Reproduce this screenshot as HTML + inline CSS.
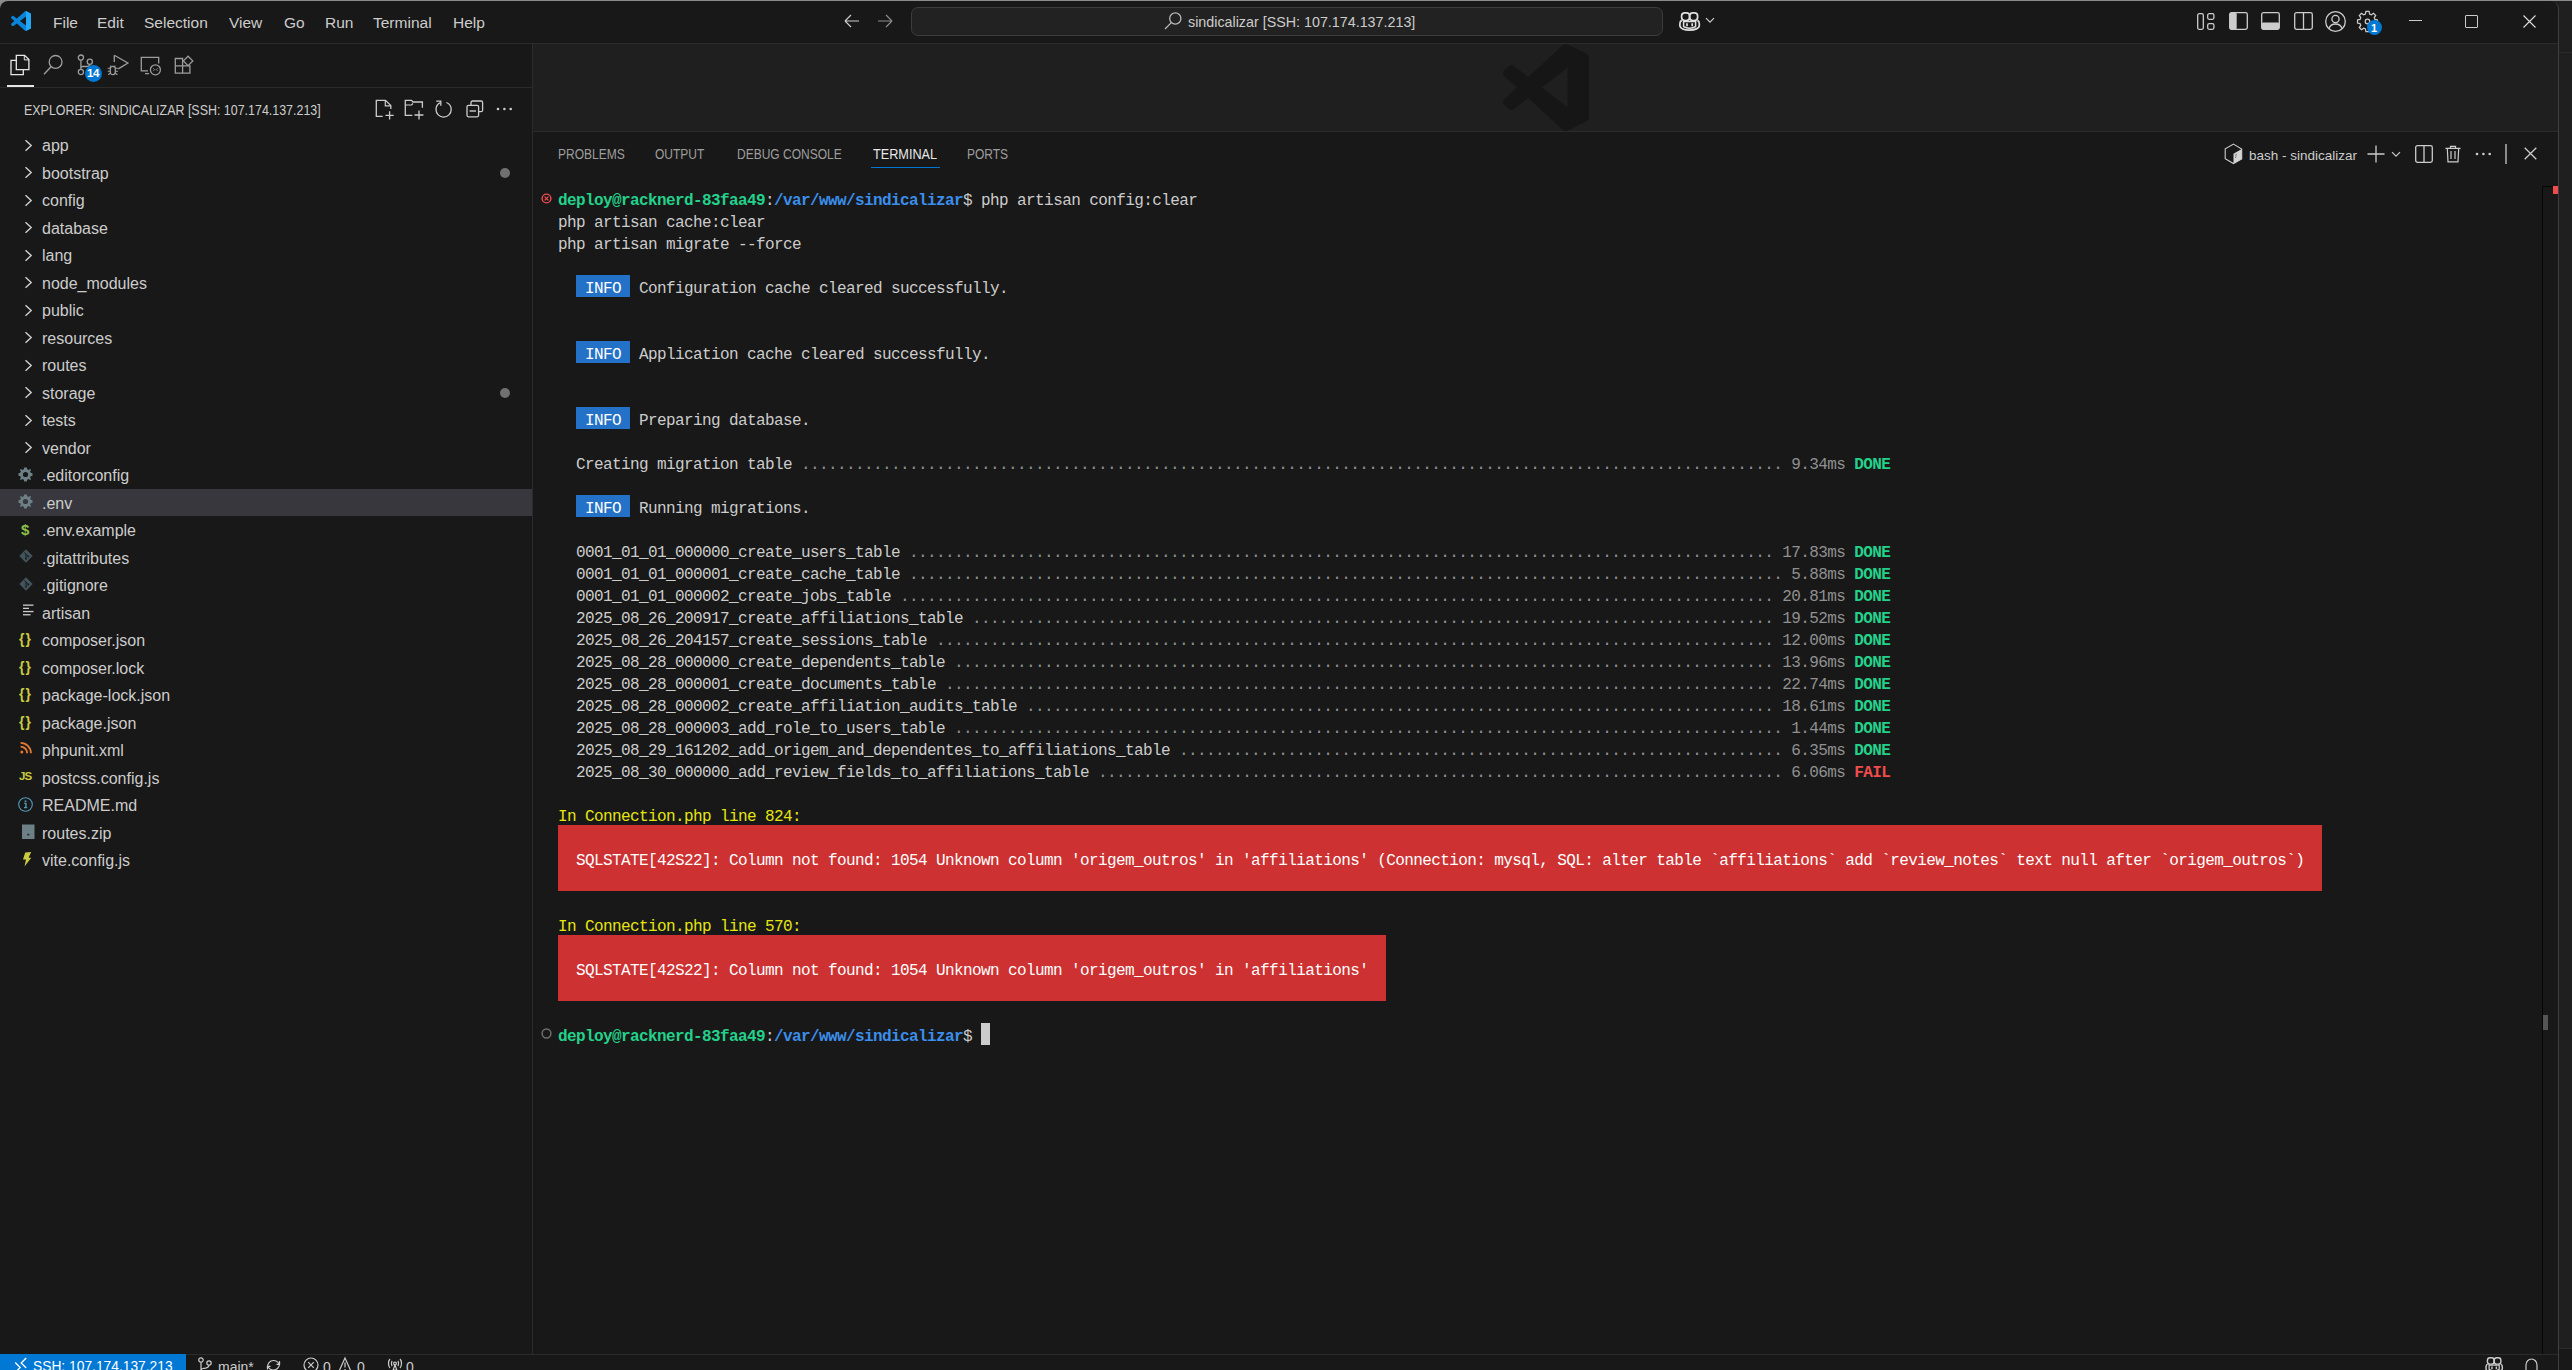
<!DOCTYPE html>
<html><head><meta charset="utf-8">
<style>
*{margin:0;padding:0;box-sizing:border-box}
html,body{width:2572px;height:1370px;overflow:hidden;background:#1f1f1f}
body{position:relative;font-family:"Liberation Sans",sans-serif;color:#cccccc}
.a{position:absolute}
.t{position:absolute;white-space:pre;line-height:1}
svg.i{position:absolute;overflow:visible;fill:none;stroke:#cccccc;stroke-width:1.25}
.menu{font-size:15.5px;color:#cccccc;top:15px}
.tree{font-size:16px;color:#cccccc}
.tab{font-size:14px;color:#9d9d9d;top:147px;transform-origin:0 0}
#term{position:absolute;left:558px;top:190px;font-family:"Liberation Mono",monospace;font-size:16px;letter-spacing:-0.6px;line-height:22px;white-space:pre;color:#cccccc}
.g{color:#23d18b;font-weight:bold}
.b{color:#3b8eea;font-weight:bold}
.d{color:#909090}
.y{color:#e5e510}
.w{color:#ffffff}
.f{color:#f14c4c;font-weight:bold}
</style></head><body>
<!-- window frame -->
<div class="a" style="left:0;top:0;width:12px;height:12px;background:#8c8c8c"></div>
<div class="a" style="left:0;top:0;width:2572px;height:1px;background:#8c8c8c"></div>
<div class="a" style="left:2559px;top:52px;width:13px;height:1px;background:#2b2b2b"></div>
<div class="a" style="left:2559px;top:1348px;width:13px;height:22px;background:#181818;border-top:1px solid #2b2b2b"></div>
<div class="a" style="left:0;top:1px;width:2559px;height:1369px;background:#181818;border-radius:8px 8px 0 0;border-right:1px solid #3f3f3f;border-top:0"></div>

<!-- title bar border -->
<div class="a" style="left:0;top:43px;width:2558px;height:1px;background:#2b2b2b"></div>
<!-- activity bar border -->
<div class="a" style="left:0;top:87px;width:532px;height:1px;background:#2b2b2b"></div>
<!-- sidebar right border -->
<div class="a" style="left:532px;top:44px;width:1px;height:1310px;background:#2b2b2b"></div>
<!-- editor -->
<div class="a" style="left:533px;top:44px;width:2025px;height:87px;background:#1f1f1f"></div>
<!-- panel border -->
<div class="a" style="left:533px;top:131px;width:2025px;height:1px;background:#2b2b2b"></div>
<!-- status bar -->
<div class="a" style="left:0;top:1354px;width:2558px;height:1px;background:#2b2b2b"></div>

<!-- logo -->
<svg class="i" style="left:11px;top:11px;stroke:none" width="20" height="20" viewBox="0 0 100 100"><defs><linearGradient id="lg" x1="0" y1="0" x2="1" y2="0"><stop offset="0" stop-color="#0065a9"/><stop offset="1" stop-color="#1f9cf0"/></linearGradient></defs><path fill="#0a84d8" fill-rule="evenodd" d="M70.9 99.3C72.5 99.9 74.3 99.9 75.9 99.1L96.5 89.2C98.6 88.2 100 86 100 83.6V16.4C100 14 98.6 11.8 96.5 10.8L75.9 .9C73.8-.1 71.3.1 69.5 1.4 69.3 1.6 69 1.8 68.8 2.1L29.4 38 12.2 25C10.6 23.8 8.4 23.9 6.9 25.2L1.4 30.3C-.5 31.9-.5 34.8 1.4 36.4L16.2 50 1.4 63.6C-.5 65.2-.5 68.1 1.4 69.7L6.9 74.8C8.4 76.1 10.6 76.2 12.2 75L29.4 62 68.8 97.9C69.4 98.5 70.1 99 70.9 99.3ZM75 27.3 45.1 50 75 72.7V27.3Z"/><path fill="#24a7f5" d="M75 0.5 96.5 10.8C98.6 11.8 100 14 100 16.4V83.6C100 86 98.6 88.2 96.5 89.2L75 99.5Z"/></svg>
<!-- menu -->
<div class="t menu" style="left:53px">File</div>
<div class="t menu" style="left:97px">Edit</div>
<div class="t menu" style="left:144px">Selection</div>
<div class="t menu" style="left:229px">View</div>
<div class="t menu" style="left:284px">Go</div>
<div class="t menu" style="left:325px">Run</div>
<div class="t menu" style="left:373px">Terminal</div>
<div class="t menu" style="left:453px">Help</div>
<!-- nav arrows -->
<svg class="i" style="left:844px;top:13px" width="16" height="16" viewBox="0 0 16 16"><path d="M1 8H15M1 8L7 2M1 8L7 14" stroke="#cccccc" stroke-width="1.2"/></svg>
<svg class="i" style="left:877px;top:13px" width="16" height="16" viewBox="0 0 16 16"><path d="M1 8H15M15 8L9 2M15 8L9 14" stroke="#8b8b8b" stroke-width="1.2"/></svg>
<!-- command center -->
<div class="a" style="left:911px;top:7px;width:752px;height:29px;background:#222222;border:1px solid #3c3c3c;border-radius:7px"></div>
<svg class="i" style="left:1164px;top:12px" width="18" height="18" viewBox="0 0 18 18"><circle cx="11.3" cy="6.5" r="5.6" stroke="#b8b8b8" stroke-width="1.3"/><path d="M7.3 10.6L1 17" stroke="#b8b8b8" stroke-width="1.3"/></svg>
<div class="t" style="left:1188px;top:15px;font-size:14.3px;color:#cccccc">sindicalizar [SSH: 107.174.137.213]</div>
<!-- copilot -->
<svg class="i" style="left:1679px;top:12px" width="22" height="19" viewBox="0 0 22 19"><rect x="2.6" y="0.9" width="8" height="7.6" rx="3.2" stroke="#e0e0e0" stroke-width="1.7"/><rect x="10.6" y="0.9" width="8" height="7.6" rx="3.2" stroke="#e0e0e0" stroke-width="1.7"/><path d="M2.8 8.4C1.3 9 0.9 10.3 0.9 11.8V13.6C0.9 16.4 5.2 18.1 10.6 18.1S20.3 16.4 20.3 13.6V11.8C20.3 10.3 19.9 9 18.4 8.4" stroke="#e0e0e0" stroke-width="1.7"/><path d="M4.6 9.6H16.6V14.6C14.6 15.8 12.6 16.2 10.6 16.2S6.6 15.8 4.6 14.6Z" stroke="#e0e0e0" stroke-width="1.5"/><path d="M8 11.2V14.3M13.2 11.2V14.3" stroke="#e0e0e0" stroke-width="1.7"/></svg>
<svg class="i" style="left:1705px;top:17px" width="10" height="7" viewBox="0 0 10 7"><path d="M1 1.2L5 5.2 9 1.2" stroke="#cccccc" stroke-width="1.2"/></svg>
<!-- layout controls -->
<svg class="i" style="left:2197px;top:13px" width="18" height="17" viewBox="0 0 18 17"><rect x="0.7" y="0.7" width="5.6" height="15.6" rx="1.5" stroke="#cccccc" stroke-width="1.3"/><rect x="10.7" y="0.7" width="6.2" height="5.6" rx="1.5" stroke="#cccccc" stroke-width="1.3"/><rect x="10.7" y="10.7" width="6.2" height="5.6" rx="1.5" stroke="#cccccc" stroke-width="1.3"/></svg>
<svg class="i" style="left:2229px;top:12px" width="19" height="18" viewBox="0 0 19 18"><rect x="0.7" y="0.7" width="17.6" height="16.6" rx="1.8" stroke="#cccccc" stroke-width="1.3"/><rect x="0.7" y="0.7" width="7" height="16.6" rx="1.5" fill="#cccccc" stroke="none"/></svg>
<svg class="i" style="left:2261px;top:12px" width="19" height="18" viewBox="0 0 19 18"><rect x="0.7" y="0.7" width="17.6" height="16.6" rx="1.8" stroke="#cccccc" stroke-width="1.3"/><rect x="0.7" y="10.5" width="17.6" height="6.8" rx="1.5" fill="#cccccc" stroke="none"/></svg>
<svg class="i" style="left:2294px;top:12px" width="19" height="18" viewBox="0 0 19 18"><rect x="0.7" y="0.7" width="17.6" height="16.6" rx="1.8" stroke="#cccccc" stroke-width="1.3"/><path d="M9.5 0.7V17.3" stroke="#cccccc" stroke-width="1.3"/></svg>
<svg class="i" style="left:2325px;top:11px" width="21" height="21" viewBox="0 0 21 21"><circle cx="10.5" cy="10.5" r="9.8" stroke="#cccccc" stroke-width="1.3"/><circle cx="10.5" cy="8" r="3.6" stroke="#cccccc" stroke-width="1.3"/><path d="M4 17.6C5 14.5 7.5 13 10.5 13S16 14.5 17 17.6" stroke="#cccccc" stroke-width="1.3"/></svg>
<svg class="i" style="left:2357px;top:11px" width="21" height="21" viewBox="0 0 24 24"><path d="M10.2 1.5H13.8L14.4 4.4 16.4 5.3 18.9 3.6 21.4 6.1 19.7 8.6 20.5 10.6 23.4 11.2V14.8L20.5 15.4 19.7 17.4 21.4 19.9 18.9 22.4 16.4 20.7 14.4 21.6 13.8 24.5H10.2L9.6 21.6 7.6 20.7 5.1 22.4 2.6 19.9 4.3 17.4 3.5 15.4 0.6 14.8V11.2L3.5 10.6 4.3 8.6 2.6 6.1 5.1 3.6 7.6 5.3 9.6 4.4Z" transform="translate(0,-1)" stroke="#cccccc" stroke-width="1.4"/><circle cx="12" cy="12" r="2.6" stroke="#cccccc" stroke-width="1.4"/></svg>
<div class="a" style="left:2367px;top:20px;width:15px;height:15px;border-radius:50%;background:#0078d4"></div>
<div class="t" style="left:2371px;top:23px;font-size:11px;font-weight:bold;color:#ffffff">1</div>
<!-- window controls -->
<div class="a" style="left:2409px;top:20px;width:13px;height:1px;background:#cccccc"></div>
<div class="a" style="left:2465px;top:15px;width:13px;height:13px;border:1px solid #cccccc;border-radius:1px"></div>
<svg class="i" style="left:2523px;top:15px" width="13" height="13" viewBox="0 0 13 13"><path d="M0.5 0.5L12.5 12.5M12.5 0.5L0.5 12.5" stroke="#dddddd" stroke-width="1.1"/></svg>

<!-- activity bar icons -->
<svg class="i" style="left:10px;top:54px" width="20" height="22" viewBox="0 0 20 22"><path d="M6.3 1.3H14.6L18.9 5.6V15.7H6.3Z" stroke="#e7e7e7" stroke-width="1.3"/><path d="M14.3 1.3V5.9H18.9" stroke="#e7e7e7" stroke-width="1"/><path d="M6.3 6.3H1V20.7H13.3V15.7" stroke="#e7e7e7" stroke-width="1.3"/></svg>
<svg class="i" style="left:43px;top:54px" width="21" height="22" viewBox="0 0 21 22"><circle cx="12.6" cy="7.9" r="6.4" stroke="#9d9d9d" stroke-width="1.3"/><path d="M8.2 12.6L1 20.3" stroke="#9d9d9d" stroke-width="1.4"/></svg>
<svg class="i" style="left:76px;top:53px" width="20" height="22" viewBox="0 0 20 22"><circle cx="4.9" cy="4.6" r="2.6" stroke="#9d9d9d" stroke-width="1.3"/><circle cx="4.9" cy="19" r="2.6" stroke="#9d9d9d" stroke-width="1.3"/><circle cx="13.8" cy="8.7" r="2.6" stroke="#9d9d9d" stroke-width="1.3"/><path d="M4.9 7.2V16.4M13.8 11.3C13.8 13.5 12 13.5 10 13.5H6.5C5.5 13.5 4.9 14 4.9 15" stroke="#9d9d9d" stroke-width="1.3"/></svg>
<div class="a" style="left:85px;top:65px;width:17px;height:17px;border-radius:50%;background:#0078d4"></div>
<div class="t" style="left:87px;top:68px;font-size:11.5px;font-weight:bold;color:#ffffff;letter-spacing:-0.3px">14</div>
<svg class="i" style="left:107px;top:54px" width="22" height="22" viewBox="0 0 22 22"><path d="M7.3 1.3V8M7.3 1.3L20.9 9 11.3 14.9" stroke="#9d9d9d" stroke-width="1.3"/><path d="M3.3 14.5C3.3 13 4.5 12.3 5.8 12.3S8.3 13 8.3 14.5V18C8.3 19.5 7.2 20.6 5.8 20.6S3.3 19.5 3.3 18Z" stroke="#9d9d9d" stroke-width="1.3"/><path d="M0.7 14.2H3.3M8.3 14.2H10.9M0.7 17.3H3.3M8.3 17.3H10.9M1.2 20.7L3.5 19M10.4 20.7L8.1 19M4.3 12.6L3.3 11.6M7.3 12.6L8.3 11.6" stroke="#9d9d9d" stroke-width="1.1"/></svg>
<svg class="i" style="left:140px;top:56px" width="22" height="20" viewBox="0 0 22 20"><path d="M8 14.8H1.3V1.3H18.7V7.6" stroke="#9d9d9d" stroke-width="1.3"/><path d="M5 17.6H9" stroke="#9d9d9d" stroke-width="1.3"/><circle cx="15.4" cy="13.8" r="5" stroke="#9d9d9d" stroke-width="1.3"/><path d="M13.3 12.3L14.6 13.6 13.3 14.9M17.6 12.3L16.3 13.6 17.6 14.9" stroke="#9d9d9d" stroke-width="0.9"/></svg>
<svg class="i" style="left:174px;top:55px" width="20" height="20" viewBox="0 0 20 20"><path d="M1.3 3.5H8.6V10.8H15.9V18.2H1.3ZM1.3 10.8H8.6V18.2" stroke="#9d9d9d" stroke-width="1.3"/><path d="M14.1 1.2L18.8 5.9 14.1 10.6 9.4 5.9Z" stroke="#9d9d9d" stroke-width="1.3"/></svg>
<div class="a" style="left:7px;top:85px;width:27px;height:2px;background:#e7e7e7"></div>
<!-- explorer header -->
<div class="t" style="left:24px;top:104px;font-size:13.75px;color:#cccccc;transform:scaleX(0.905);transform-origin:0 0">EXPLORER: SINDICALIZAR [SSH: 107.174.137.213]</div>
<svg class="i" style="left:375px;top:99px" width="21" height="21" viewBox="0 0 21 21"><path d="M7.7 17.3H1.3V1.3H10.5L15.8 6.6V10" stroke="#cccccc" stroke-width="1.3"/><path d="M10.3 1.3V6.8H15.8" stroke="#cccccc" stroke-width="1.2"/><path d="M14.6 12.2V20.4M10.5 16.3H18.7" stroke="#cccccc" stroke-width="1.3"/></svg>
<svg class="i" style="left:404px;top:99px" width="22" height="21" viewBox="0 0 22 21"><path d="M8.3 16.3H1.3V1.3H7.5L9 3H18.4V8.7" stroke="#cccccc" stroke-width="1.3"/><path d="M1.3 6H7.5L9 4.5" stroke="#cccccc" stroke-width="1.2"/><path d="M15 11.5V20.4M10.5 16H19.4" stroke="#cccccc" stroke-width="1.3"/></svg>
<svg class="i" style="left:435px;top:100px" width="18" height="19" viewBox="0 0 18 19"><path d="M5.4 2.6C2.8 3.8 1 6.4 1 9.5 1 13.7 4.4 17.1 8.6 17.1S16.2 13.7 16.2 9.5C16.2 6.3 14.2 3.6 11.4 2.5" stroke="#cccccc" stroke-width="1.3"/><path d="M1.2 1.2H5.8V5.8" stroke="#cccccc" stroke-width="1.3"/></svg>
<svg class="i" style="left:466px;top:100px" width="18" height="18" viewBox="0 0 18 18"><rect x="5" y="1" width="11.6" height="10.7" rx="1.5" stroke="#cccccc" stroke-width="1.3"/><rect x="1" y="5.3" width="11.6" height="11.5" rx="1.5" fill="#181818" stroke="#cccccc" stroke-width="1.3"/><path d="M3.6 11H10" stroke="#cccccc" stroke-width="1.4"/></svg>
<svg class="i" style="left:496px;top:107px" width="18" height="4" viewBox="0 0 18 4"><circle cx="2" cy="2" r="1.3" fill="#cccccc" stroke="none"/><circle cx="8.4" cy="2" r="1.3" fill="#cccccc" stroke="none"/><circle cx="14.7" cy="2" r="1.3" fill="#cccccc" stroke="none"/></svg>

<div class="a" style="left:0;top:488.75px;width:532px;height:27.5px;background:#37373d"></div>
<svg class="i" style="left:24px;top:138.55px" width="9" height="13" viewBox="0 0 9 13"><path d="M1.5 1.2L7.2 6.5 1.5 11.8" stroke="#d0d0d0" stroke-width="1.4"/></svg>
<div class="t tree" style="left:42px;top:138.25px">app</div>
<svg class="i" style="left:24px;top:166.05px" width="9" height="13" viewBox="0 0 9 13"><path d="M1.5 1.2L7.2 6.5 1.5 11.8" stroke="#d0d0d0" stroke-width="1.4"/></svg>
<div class="t tree" style="left:42px;top:165.75px">bootstrap</div>
<svg class="i" style="left:24px;top:193.55px" width="9" height="13" viewBox="0 0 9 13"><path d="M1.5 1.2L7.2 6.5 1.5 11.8" stroke="#d0d0d0" stroke-width="1.4"/></svg>
<div class="t tree" style="left:42px;top:193.25px">config</div>
<svg class="i" style="left:24px;top:221.05px" width="9" height="13" viewBox="0 0 9 13"><path d="M1.5 1.2L7.2 6.5 1.5 11.8" stroke="#d0d0d0" stroke-width="1.4"/></svg>
<div class="t tree" style="left:42px;top:220.75px">database</div>
<svg class="i" style="left:24px;top:248.55px" width="9" height="13" viewBox="0 0 9 13"><path d="M1.5 1.2L7.2 6.5 1.5 11.8" stroke="#d0d0d0" stroke-width="1.4"/></svg>
<div class="t tree" style="left:42px;top:248.25px">lang</div>
<svg class="i" style="left:24px;top:276.05px" width="9" height="13" viewBox="0 0 9 13"><path d="M1.5 1.2L7.2 6.5 1.5 11.8" stroke="#d0d0d0" stroke-width="1.4"/></svg>
<div class="t tree" style="left:42px;top:275.75px">node_modules</div>
<svg class="i" style="left:24px;top:303.55px" width="9" height="13" viewBox="0 0 9 13"><path d="M1.5 1.2L7.2 6.5 1.5 11.8" stroke="#d0d0d0" stroke-width="1.4"/></svg>
<div class="t tree" style="left:42px;top:303.25px">public</div>
<svg class="i" style="left:24px;top:331.05px" width="9" height="13" viewBox="0 0 9 13"><path d="M1.5 1.2L7.2 6.5 1.5 11.8" stroke="#d0d0d0" stroke-width="1.4"/></svg>
<div class="t tree" style="left:42px;top:330.75px">resources</div>
<svg class="i" style="left:24px;top:358.55px" width="9" height="13" viewBox="0 0 9 13"><path d="M1.5 1.2L7.2 6.5 1.5 11.8" stroke="#d0d0d0" stroke-width="1.4"/></svg>
<div class="t tree" style="left:42px;top:358.25px">routes</div>
<svg class="i" style="left:24px;top:386.05px" width="9" height="13" viewBox="0 0 9 13"><path d="M1.5 1.2L7.2 6.5 1.5 11.8" stroke="#d0d0d0" stroke-width="1.4"/></svg>
<div class="t tree" style="left:42px;top:385.75px">storage</div>
<svg class="i" style="left:24px;top:413.55px" width="9" height="13" viewBox="0 0 9 13"><path d="M1.5 1.2L7.2 6.5 1.5 11.8" stroke="#d0d0d0" stroke-width="1.4"/></svg>
<div class="t tree" style="left:42px;top:413.25px">tests</div>
<svg class="i" style="left:24px;top:441.05px" width="9" height="13" viewBox="0 0 9 13"><path d="M1.5 1.2L7.2 6.5 1.5 11.8" stroke="#d0d0d0" stroke-width="1.4"/></svg>
<div class="t tree" style="left:42px;top:440.75px">vendor</div>
<svg class="i" style="left:18px;top:466.75px;stroke:none" width="15" height="15" viewBox="0 0 15 15"><path fill="#6d8086" d="M6.2 0.5H8.8L9.2 2.3 10.6 2.9 12.2 1.9 13.1 2.8 12.1 4.4 12.7 5.8 14.5 6.2V8.8L12.7 9.2 12.1 10.6 13.1 12.2 12.2 13.1 10.6 12.1 9.2 12.7 8.8 14.5H6.2L5.8 12.7 4.4 12.1 2.8 13.1 1.9 12.2 2.9 10.6 2.3 9.2 0.5 8.8V6.2L2.3 5.8 2.9 4.4 1.9 2.8 2.8 1.9 4.4 2.9 5.8 2.3ZM7.5 4.9A2.6 2.6 0 1 0 7.5 10.1 2.6 2.6 0 1 0 7.5 4.9Z"/></svg>
<div class="t tree" style="left:42px;top:468.25px">.editorconfig</div>
<svg class="i" style="left:18px;top:494.25px;stroke:none" width="15" height="15" viewBox="0 0 15 15"><path fill="#6d8086" d="M6.2 0.5H8.8L9.2 2.3 10.6 2.9 12.2 1.9 13.1 2.8 12.1 4.4 12.7 5.8 14.5 6.2V8.8L12.7 9.2 12.1 10.6 13.1 12.2 12.2 13.1 10.6 12.1 9.2 12.7 8.8 14.5H6.2L5.8 12.7 4.4 12.1 2.8 13.1 1.9 12.2 2.9 10.6 2.3 9.2 0.5 8.8V6.2L2.3 5.8 2.9 4.4 1.9 2.8 2.8 1.9 4.4 2.9 5.8 2.3ZM7.5 4.9A2.6 2.6 0 1 0 7.5 10.1 2.6 2.6 0 1 0 7.5 4.9Z"/></svg>
<div class="t tree" style="left:42px;top:495.75px">.env</div>
<div class="t" style="left:21px;top:522.25px;font-size:15px;font-weight:bold;color:#8dc149">$</div>
<div class="t tree" style="left:42px;top:523.25px">.env.example</div>
<svg class="i" style="left:19px;top:549.25px;stroke:none" width="14" height="14" viewBox="0 0 14 14"><path fill="#41535b" d="M7 0.3L13.7 7 7 13.7 0.3 7Z"/><path d="M5.3 3.5L7 5.2V9.8M7 5.2L9.2 7.4" stroke="#181818" stroke-width="1" fill="none"/><circle cx="7" cy="9.8" r="0.9" fill="#181818"/><circle cx="9.3" cy="7.5" r="0.9" fill="#181818"/></svg>
<div class="t tree" style="left:42px;top:550.75px">.gitattributes</div>
<svg class="i" style="left:19px;top:576.75px;stroke:none" width="14" height="14" viewBox="0 0 14 14"><path fill="#41535b" d="M7 0.3L13.7 7 7 13.7 0.3 7Z"/><path d="M5.3 3.5L7 5.2V9.8M7 5.2L9.2 7.4" stroke="#181818" stroke-width="1" fill="none"/><circle cx="7" cy="9.8" r="0.9" fill="#181818"/><circle cx="9.3" cy="7.5" r="0.9" fill="#181818"/></svg>
<div class="t tree" style="left:42px;top:578.25px">.gitignore</div>
<svg class="i" style="left:23px;top:604.25px;stroke:none" width="11" height="12" viewBox="0 0 11 12"><rect x="0" y="0.5" width="10.5" height="1.3" fill="#cccccc"/><rect x="0" y="3.7" width="6" height="1.3" fill="#cccccc"/><rect x="0" y="6.9" width="10.5" height="1.3" fill="#cccccc"/><rect x="0" y="10.1" width="7.5" height="1.3" fill="#cccccc"/></svg>
<div class="t tree" style="left:42px;top:605.75px">artisan</div>
<div class="t" style="left:19px;top:632.25px;font-size:14px;font-weight:bold;color:#cbcb41;letter-spacing:1px">{}</div>
<div class="t tree" style="left:42px;top:633.25px">composer.json</div>
<div class="t" style="left:19px;top:659.75px;font-size:14px;font-weight:bold;color:#cbcb41;letter-spacing:1px">{}</div>
<div class="t tree" style="left:42px;top:660.75px">composer.lock</div>
<div class="t" style="left:19px;top:687.25px;font-size:14px;font-weight:bold;color:#cbcb41;letter-spacing:1px">{}</div>
<div class="t tree" style="left:42px;top:688.25px">package-lock.json</div>
<div class="t" style="left:19px;top:714.75px;font-size:14px;font-weight:bold;color:#cbcb41;letter-spacing:1px">{}</div>
<div class="t tree" style="left:42px;top:715.75px">package.json</div>
<svg class="i" style="left:20px;top:741.75px;stroke:none" width="12" height="12" viewBox="0 0 12 12"><circle cx="1.8" cy="10" r="1.5" fill="#e37933"/><path d="M0.6 4.6C4.2 4.6 7.2 7.5 7.2 11.2" stroke="#e37933" stroke-width="1.8" fill="none"/><path d="M0.6 0.9C6.3 0.9 10.9 5.5 10.9 11.2" stroke="#e37933" stroke-width="1.8" fill="none"/></svg>
<div class="t tree" style="left:42px;top:743.25px">phpunit.xml</div>
<div class="t" style="left:19px;top:771.25px;font-size:11.5px;font-weight:bold;color:#cbcb41;letter-spacing:-0.8px">JS</div>
<div class="t tree" style="left:42px;top:770.75px">postcss.config.js</div>
<svg class="i" style="left:18px;top:796.75px" width="15" height="15" viewBox="0 0 15 15"><circle cx="7.5" cy="7.5" r="6.8" stroke="#519aba" stroke-width="1.1"/><circle cx="7.5" cy="4.2" r="1" fill="#519aba" stroke="none"/><path d="M6.2 6.4H7.9V10.6M6 10.6H9.2" stroke="#519aba" stroke-width="1.4"/></svg>
<div class="t tree" style="left:42px;top:798.25px">README.md</div>
<svg class="i" style="left:22px;top:824.25px;stroke:none" width="13" height="15" viewBox="0 0 13 15"><rect x="0" y="0.5" width="12.5" height="14.5" fill="#6d8086"/><rect x="5.2" y="9.8" width="2.2" height="1.6" fill="#1f2a30"/></svg>
<div class="t tree" style="left:42px;top:825.75px">routes.zip</div>
<svg class="i" style="left:22px;top:851.75px;stroke:none" width="10" height="15" viewBox="0 0 10 15"><path fill="#cbcb41" d="M3.2 0.5L9.2 0 6.6 5.7 9.3 5.7 2.5 14.5 4 7.5 1 7.5Z"/></svg>
<div class="t tree" style="left:42px;top:853.25px">vite.config.js</div>
<div class="a" style="left:500px;top:167.55px;width:10px;height:10px;border-radius:50%;background:#707070"></div>
<div class="a" style="left:500px;top:387.55px;width:10px;height:10px;border-radius:50%;background:#707070"></div>

<svg class="i" style="left:1503px;top:44px;stroke:none" width="86" height="87" viewBox="0 0 100 100" preserveAspectRatio="none"><path fill="#161616" fill-rule="evenodd" d="M70.9 99.3C72.5 99.9 74.3 99.9 75.9 99.1L96.5 89.2C98.6 88.2 100 86 100 83.6V16.4C100 14 98.6 11.8 96.5 10.8L75.9 .9C73.8-.1 71.3.1 69.5 1.4 69.3 1.6 69 1.8 68.8 2.1L29.4 38 12.2 25C10.6 23.8 8.4 23.9 6.9 25.2L1.4 30.3C-.5 31.9-.5 34.8 1.4 36.4L16.2 50 1.4 63.6C-.5 65.2-.5 68.1 1.4 69.7L6.9 74.8C8.4 76.1 10.6 76.2 12.2 75L29.4 62 68.8 97.9C69.4 98.5 70.1 99 70.9 99.3ZM75 27.3 45.1 50 75 72.7V27.3Z"/></svg>

<div class="t tab" style="left:558px;transform:scaleX(0.857)">PROBLEMS</div>
<div class="t tab" style="left:655px;transform:scaleX(0.857)">OUTPUT</div>
<div class="t tab" style="left:737px;transform:scaleX(0.857)">DEBUG CONSOLE</div>
<div class="t tab" style="left:873px;transform:scaleX(0.905);color:#e7e7e7">TERMINAL</div>
<div class="t tab" style="left:967px;transform:scaleX(0.857)">PORTS</div>
<div class="a" style="left:871px;top:166.75px;width:69px;height:1.25px;background:#0078d4"></div>
<!-- terminal tab actions -->
<svg class="i" style="left:2224px;top:143px" width="19" height="22" viewBox="0 0 19 22"><path d="M9.5 1.1L17.7 6V16L9.5 20.5 1.2 15.6V5.8Z" stroke="#cccccc" stroke-width="1.1"/><path d="M9.5 10.8L17.7 6V16L9.5 20.5Z" fill="#d4d4d4" stroke="none"/><path d="M12.6 11.6C11.8 11.4 11.4 12 11.8 12.6 12.2 13.2 12.4 13.8 11.6 14.2M12.1 10.9V11.5M11.6 14.2V15" stroke="#555" stroke-width="0.7"/></svg>
<div class="t" style="left:2249px;top:148.5px;font-size:13.5px;color:#cccccc">bash - sindicalizar</div>
<svg class="i" style="left:2367px;top:145px" width="18" height="18" viewBox="0 0 18 18"><path d="M9 0.5V17.5M0.5 9H17.5" stroke="#cccccc" stroke-width="1.3"/></svg>
<svg class="i" style="left:2391px;top:151px" width="10" height="7" viewBox="0 0 10 7"><path d="M1 1.2L5 5.2 9 1.2" stroke="#cccccc" stroke-width="1.2"/></svg>
<svg class="i" style="left:2415px;top:145px" width="18" height="18" viewBox="0 0 18 18"><rect x="0.7" y="0.7" width="16.6" height="16.6" rx="1.8" stroke="#cccccc" stroke-width="1.3"/><path d="M9 0.7V17.3" stroke="#cccccc" stroke-width="1.3"/></svg>
<svg class="i" style="left:2445px;top:145px" width="16" height="18" viewBox="0 0 16 18"><path d="M0.5 3.3H15.5M5.5 3.3V1.3H10.5V3.3M2.3 3.3L3 16.8H13L13.7 3.3M6 6V14M10 6V14" stroke="#cccccc" stroke-width="1.2"/></svg>
<svg class="i" style="left:2475px;top:152px" width="17" height="4" viewBox="0 0 17 4"><circle cx="2" cy="2" r="1.3" fill="#cccccc" stroke="none"/><circle cx="8.4" cy="2" r="1.3" fill="#cccccc" stroke="none"/><circle cx="14.7" cy="2" r="1.3" fill="#cccccc" stroke="none"/></svg>
<div class="a" style="left:2505px;top:144px;width:1.5px;height:20px;background:#8a8a8a"></div>
<svg class="i" style="left:2524px;top:147px" width="13" height="13" viewBox="0 0 13 13"><path d="M0.7 0.7L12.3 12.3M12.3 0.7L0.7 12.3" stroke="#cccccc" stroke-width="1.3"/></svg>
<!-- scrollbar / overview -->
<div class="a" style="left:2542px;top:186px;width:1px;height:1168px;background:#050505"></div><div class="a" style="left:2542px;top:186px;width:11px;height:1px;background:#050505"></div>
<div class="a" style="left:2553px;top:186px;width:5px;height:8px;background:#f14c4c"></div>
<div class="a" style="left:2543px;top:1015px;width:5px;height:15px;background:#555555"></div>

<div class="a" style="left:576px;top:275px;width:54px;height:22px;background:#2472c8"></div>
<div class="a" style="left:576px;top:341px;width:54px;height:22px;background:#2472c8"></div>
<div class="a" style="left:576px;top:407px;width:54px;height:22px;background:#2472c8"></div>
<div class="a" style="left:576px;top:495px;width:54px;height:22px;background:#2472c8"></div>
<div class="a" style="left:558px;top:825px;width:1764px;height:66px;background:#cd3131"></div>
<div class="a" style="left:558px;top:935px;width:828px;height:66px;background:#cd3131"></div>
<div class="a" style="left:981px;top:1023px;width:9px;height:22px;background:#cccccc"></div>
<svg class="i" style="left:541px;top:193px" width="11" height="11" viewBox="0 0 11 11"><circle cx="5.5" cy="5.5" r="4.4" stroke="#f14c4c" stroke-width="1.4"/><path d="M3.6 3.6L7.4 7.4M7.4 3.6L3.6 7.4" stroke="#f14c4c" stroke-width="1.2"/></svg>
<svg class="i" style="left:541px;top:1028px" width="11" height="11" viewBox="0 0 11 11"><circle cx="5.5" cy="5.5" r="4.4" stroke="#6e6e6e" stroke-width="1.5"/></svg>
<div id="term"><span class="g">deploy@racknerd-83faa49</span>:<span class="b">/var/www/sindicalizar</span>$ php artisan config:clear
php artisan cache:clear
php artisan migrate --force

  <span class="w"> INFO </span> Configuration cache cleared successfully.


  <span class="w"> INFO </span> Application cache cleared successfully.


  <span class="w"> INFO </span> Preparing database.

  Creating migration table <span class="d">............................................................................................................. 9.34ms</span> <span class="g">DONE</span>

  <span class="w"> INFO </span> Running migrations.

  0001_01_01_000000_create_users_table <span class="d">................................................................................................ 17.83ms</span> <span class="g">DONE</span>
  0001_01_01_000001_create_cache_table <span class="d">................................................................................................. 5.88ms</span> <span class="g">DONE</span>
  0001_01_01_000002_create_jobs_table <span class="d">................................................................................................. 20.81ms</span> <span class="g">DONE</span>
  2025_08_26_200917_create_affiliations_table <span class="d">......................................................................................... 19.52ms</span> <span class="g">DONE</span>
  2025_08_26_204157_create_sessions_table <span class="d">............................................................................................. 12.00ms</span> <span class="g">DONE</span>
  2025_08_28_000000_create_dependents_table <span class="d">........................................................................................... 13.96ms</span> <span class="g">DONE</span>
  2025_08_28_000001_create_documents_table <span class="d">............................................................................................ 22.74ms</span> <span class="g">DONE</span>
  2025_08_28_000002_create_affiliation_audits_table <span class="d">................................................................................... 18.61ms</span> <span class="g">DONE</span>
  2025_08_28_000003_add_role_to_users_table <span class="d">............................................................................................ 1.44ms</span> <span class="g">DONE</span>
  2025_08_29_161202_add_origem_and_dependentes_to_affiliations_table <span class="d">................................................................... 6.35ms</span> <span class="g">DONE</span>
  2025_08_30_000000_add_review_fields_to_affiliations_table <span class="d">............................................................................ 6.06ms</span> <span class="f">FAIL</span>

<span class="y">In Connection.php line 824:</span>

<span class="w">  SQLSTATE[42S22]: Column not found: 1054 Unknown column 'origem_outros' in 'affiliations' (Connection: mysql, SQL: alter table `affiliations` add `review_notes` text null after `origem_outros`)</span>


<span class="y">In Connection.php line 570:</span>

<span class="w">  SQLSTATE[42S22]: Column not found: 1054 Unknown column 'origem_outros' in 'affiliations'</span>


<span class="g">deploy@racknerd-83faa49</span>:<span class="b">/var/www/sindicalizar</span>$ </div>

<div class="a" style="left:0;top:1354px;width:186px;height:16px;background:#0078d4"></div>
<svg class="i" style="left:14px;top:1357px" width="13" height="16" viewBox="0 0 13 16"><path d="M12.2 1L7.2 6 12.2 11M1.2 5.5L6.2 10.5 1.2 15.5" stroke="#ffffff" stroke-width="1.3"/></svg>
<div class="t" style="left:33px;top:1360px;font-size:13.8px;color:#ffffff">SSH: 107.174.137.213</div>
<svg class="i" style="left:198px;top:1357px" width="14" height="16" viewBox="0 0 14 16"><circle cx="3" cy="3" r="2.2" stroke="#cccccc" stroke-width="1.2"/><circle cx="11" cy="6" r="2.2" stroke="#cccccc" stroke-width="1.2"/><path d="M3 5.2V16M11 8.2C11 11 8 11 5 11.5 3.8 11.8 3 12.5 3 14" stroke="#cccccc" stroke-width="1.2"/></svg>
<div class="t" style="left:218px;top:1360px;font-size:14px;color:#cccccc">main*</div>
<svg class="i" style="left:265px;top:1358px" width="17" height="14" viewBox="0 0 17 14"><path d="M2.5 10C2 5.5 5 2.5 8.5 2.5 11 2.5 13 4 14 6M14.5 4.5C15 9 12 12 8.5 12 6 12 4 10.5 3 8.5" stroke="#cccccc" stroke-width="1.2"/><path d="M11.5 6.3H14.5V3M5.5 8.3H2.5V11.5" stroke="#cccccc" stroke-width="1.2"/></svg>
<svg class="i" style="left:303px;top:1357px" width="16" height="16" viewBox="0 0 16 16"><circle cx="8" cy="8" r="7" stroke="#cccccc" stroke-width="1.2"/><path d="M5.2 5.2L10.8 10.8M10.8 5.2L5.2 10.8" stroke="#cccccc" stroke-width="1.2"/></svg>
<div class="t" style="left:323px;top:1360px;font-size:14px;color:#cccccc">0</div>
<svg class="i" style="left:338px;top:1357px" width="14" height="16" viewBox="0 0 14 16"><path d="M7 1L13.3 15H0.7Z" stroke="#cccccc" stroke-width="1.2"/><path d="M7 5.5V10.5M7 12V13.2" stroke="#cccccc" stroke-width="1.2"/></svg>
<div class="t" style="left:357px;top:1360px;font-size:14px;color:#cccccc">0</div>
<svg class="i" style="left:387px;top:1357px" width="16" height="16" viewBox="0 0 16 16"><path d="M3 2C1 4 1 9 3 11M13 2C15 4 15 9 13 11M5.2 4C4.2 5.2 4.2 7.8 5.2 9M10.8 4C11.8 5.2 11.8 7.8 10.8 9" stroke="#cccccc" stroke-width="1.2"/><circle cx="8" cy="6.5" r="1.4" stroke="#cccccc" stroke-width="1.2"/><path d="M8 8L5 16M8 8L11 16M6 13H10" stroke="#cccccc" stroke-width="1.2"/></svg>
<div class="t" style="left:406px;top:1360px;font-size:14px;color:#cccccc">0</div>
<svg class="i" style="left:2485px;top:1357px" width="19" height="16" viewBox="0 0 22 19"><rect x="2.6" y="0.9" width="8" height="7.6" rx="3.2" stroke="#cccccc" stroke-width="1.7"/><rect x="10.6" y="0.9" width="8" height="7.6" rx="3.2" stroke="#cccccc" stroke-width="1.7"/><path d="M2.8 8.4C1.3 9 0.9 10.3 0.9 11.8V13.6C0.9 16.4 5.2 18.1 10.6 18.1S20.3 16.4 20.3 13.6V11.8C20.3 10.3 19.9 9 18.4 8.4" stroke="#cccccc" stroke-width="1.7"/><path d="M4.6 9.6H16.6V14.6C14.6 15.8 12.6 16.2 10.6 16.2S6.6 15.8 4.6 14.6Z" stroke="#cccccc" stroke-width="1.5"/><path d="M8 11.2V14.3M13.2 11.2V14.3" stroke="#cccccc" stroke-width="1.7"/></svg>
<svg class="i" style="left:2525px;top:1358px" width="13" height="16" viewBox="0 0 13 16"><path d="M1 13V7C1 3.7 3.5 1 6.5 1S12 3.7 12 7V13" stroke="#cccccc" stroke-width="1.2"/></svg>

</body></html>
